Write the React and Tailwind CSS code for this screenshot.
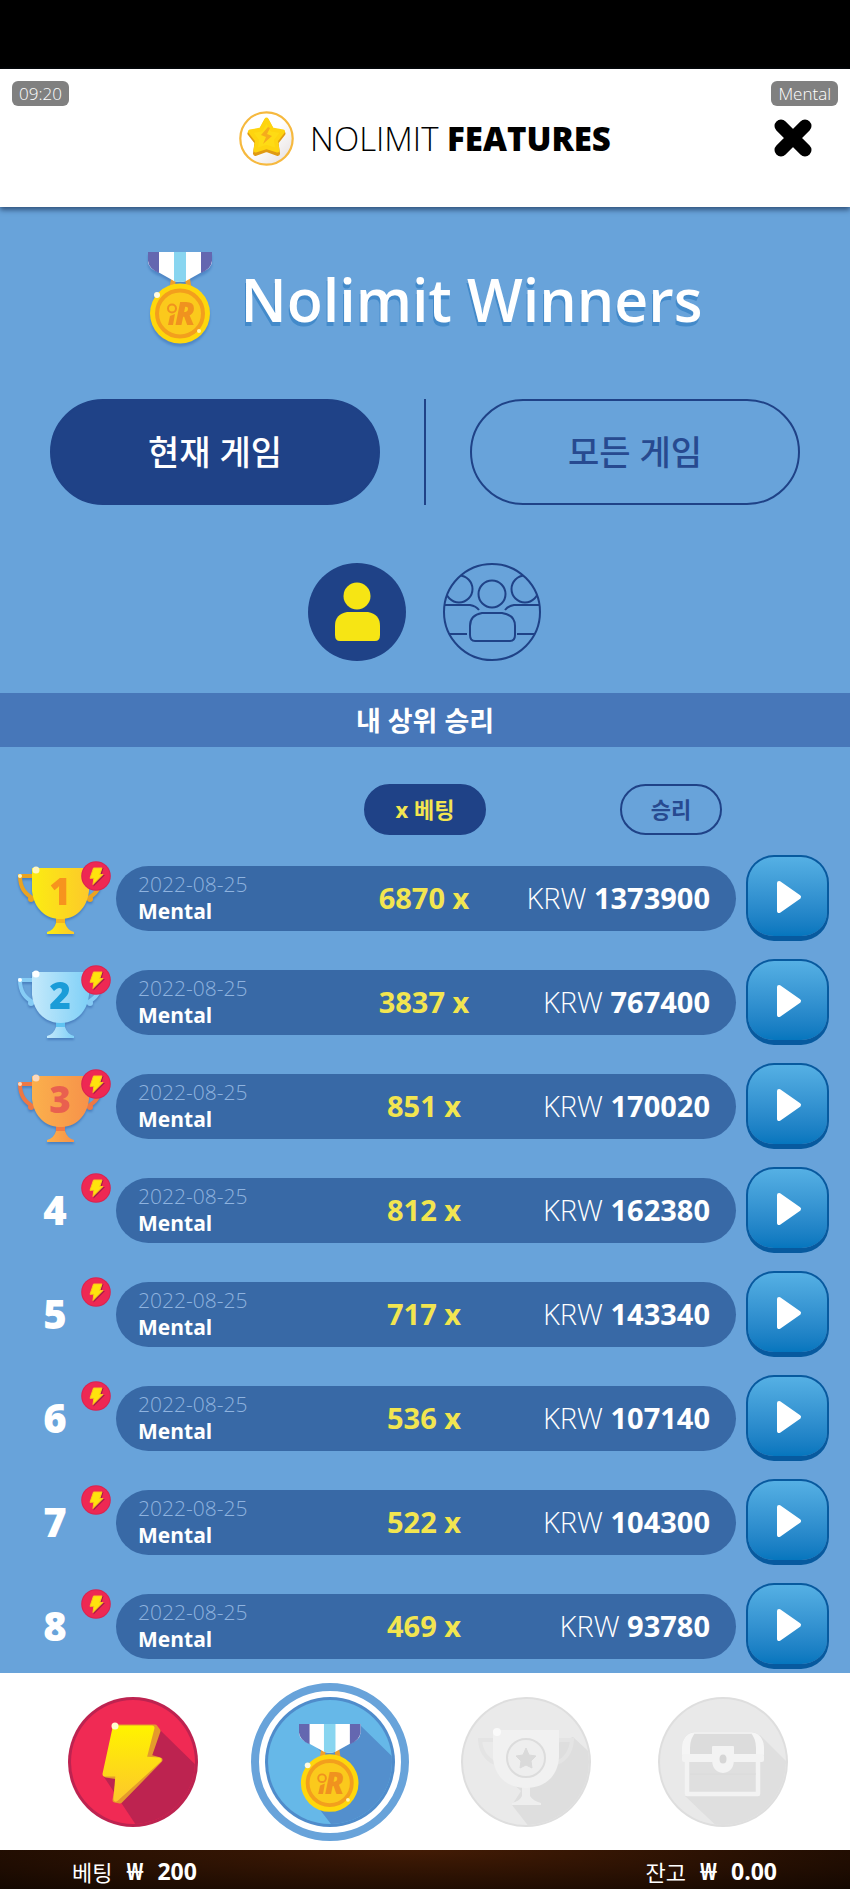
import { useState } from "react";

const wins = [
  { rank: 1, date: "2022-08-25", game: "Mental", multiplier: 6870, amount: 1373900 },
  { rank: 2, date: "2022-08-25", game: "Mental", multiplier: 3837, amount: 767400 },
  { rank: 3, date: "2022-08-25", game: "Mental", multiplier: 851, amount: 170020 },
  { rank: 4, date: "2022-08-25", game: "Mental", multiplier: 812, amount: 162380 },
  { rank: 5, date: "2022-08-25", game: "Mental", multiplier: 717, amount: 143340 },
  { rank: 6, date: "2022-08-25", game: "Mental", multiplier: 536, amount: 107140 },
  { rank: 7, date: "2022-08-25", game: "Mental", multiplier: 522, amount: 104300 },
  { rank: 8, date: "2022-08-25", game: "Mental", multiplier: 469, amount: 93780 },
];

const trophyColors = {
  1: { from: "#fbec12", to: "#fdc92a", handle: "#eba321", stem: "#f5b41f", digit: "#f7931e", shine: "#fff6c0" },
  2: { from: "#c4e9fb", to: "#7fd0f7", handle: "#86ccf5", stem: "#5fc3f2", digit: "#1b9cd8", shine: "#ffffff" },
  3: { from: "#fbb04c", to: "#f7924a", handle: "#ee7844", stem: "#f07a45", digit: "#e9604f", shine: "#fbd9bd" },
};

const StarIcon = () => (
  <svg viewBox="0 0 55 55" className="size-[55px]" aria-hidden="true">
    <defs>
      <linearGradient id="star-bg" x1="0" y1="0" x2="1" y2="1">
        <stop offset="0.5" stopColor="#ffffff" />
        <stop offset="1" stopColor="#e3dcdc" />
      </linearGradient>
    </defs>
    <circle cx="27.5" cy="27.5" r="26.2" fill="url(#star-bg)" stroke="#f6b93f" strokeWidth="2.2" />
    <path
      d="M27.5 10 L33 20.5 L44 22.5 L37 31.500 L38.5 42.500 L27.500 38.500 L16.500 42.500 L18 31.500 L11 22.500 L22 20.500Z"
      fill="#e09a12"
      stroke="#e09a12"
      strokeWidth="5"
      strokeLinejoin="round"
    />
    <path
      d="M27.500 8.500 L33 18.500 L44 20.500 L37 29.500 L38.500 39.500 L27.500 36 L16.500 39.500 L18 29.500 L11 20.500 L22 18.500Z"
      fill="#fedb14"
      stroke="#fed40f"
      strokeWidth="4"
      strokeLinejoin="round"
    />
    <path d="M29 16 L22 24 L27 26 L24 33 L33 25 L28 23 L31 17Z" fill="#f5ac1c" />
  </svg>
);

const MedalArt = () => (
  <g>
    <path d="M26 24 L24 36 M39 24 L41 36" stroke="#f0a02c" strokeWidth="5" />
    <path d="M0 0 H64 V10 Q63 17 54 20 L38 29 Q32 31 26 29 L10 20 Q1 17 0 10Z" fill="#ffffff" />
    <path d="M0 0 H11 V21 Q1 17 0 9Z" fill="#6467b0" />
    <path d="M64 0 H53 V21 Q63 17 64 9Z" fill="#6467b0" />
    <path d="M26 0 H38 V29 Q32 31 26 29Z" fill="#88d5f0" />
    <circle cx="32" cy="61.500" r="30" fill="#fed70c" />
    <circle cx="32" cy="61.500" r="23" fill="#fbc91c" stroke="#f39f1d" strokeWidth="4" />
    <circle cx="24" cy="56.500" r="4" fill="none" stroke="#f0921f" strokeWidth="2" />
    <path d="M22 64 L27 62 L25 73 H20Z" fill="#f0921f" />
    <text
      x="37"
      y="73"
      textAnchor="middle"
      fontSize="31"
      fontWeight="800"
      fontStyle="italic"
      fontFamily="'Open Sans', sans-serif"
      fill="#f0921f"
    >
      R
    </text>
    <circle cx="9" cy="43" r="3" fill="#fffbe0" />
    <circle cx="51" cy="79" r="2" fill="#fff3b0" />
  </g>
);

const BoltIcon = () => (
  <svg viewBox="0 0 130 130" className="size-[130px]" aria-hidden="true">
    <defs>
      <clipPath id="bolt-clip">
        <circle cx="65" cy="65" r="62" />
      </clipPath>
      <linearGradient id="bolt-fill" x1="0" y1="0" x2="0" y2="1">
        <stop offset="0" stopColor="#fff200" />
        <stop offset="1" stopColor="#fdc82a" />
      </linearGradient>
    </defs>
    <circle cx="65" cy="65" r="65" fill="#bd2350" />
    <circle cx="65" cy="65" r="62" fill="#f02a54" />
    <path d="M91 32 L140 80 V140 H76 L36 80Z" fill="#bd2350" clipPath="url(#bolt-clip)" />
    <path
      d="M49 30 H87 L90 34 L81 60 L92 63 L52 104 L47 103 L51 80 L38 78Z"
      fill="#e49b2c"
      stroke="#e49b2c"
      strokeWidth="5"
      strokeLinejoin="round"
    />
    <path
      d="M47 31 H84 L76 62 L91 63 L48 102 L50 77 H37Z"
      fill="url(#bolt-fill)"
      stroke="url(#bolt-fill)"
      strokeWidth="5"
      strokeLinejoin="round"
    />
    <circle cx="47" cy="29" r="3.500" fill="#fffccf" />
  </svg>
);

const BoltBadge = () => (
  <svg viewBox="0 0 30 30" className="absolute top-1.5 right-[5px] size-[30px]" aria-hidden="true">
    <circle cx="15" cy="15" r="14.800" fill="#d92350" />
    <circle cx="15" cy="15" r="13.800" fill="#ee2853" />
    <path d="M13.500 7 H22.500 L20.500 14 H24 L12.500 25.500 L13 18 H10Z" fill="#a31d48" />
    <path
      d="M12.500 7 H21 L18.800 13.500 H22 L12 23.500 L12.800 17.300 H9Z"
      fill="#ffe40c"
      stroke="#fdc51c"
      strokeWidth="1"
      strokeLinejoin="round"
    />
  </svg>
);

const MedalIcon = () => (
  <svg viewBox="0 0 130 130" className="size-[130px]" aria-hidden="true">
    <defs>
      <clipPath id="medal-clip">
        <circle cx="65" cy="65" r="62" />
      </clipPath>
    </defs>
    <circle cx="65" cy="65" r="65" fill="#4f8ccb" />
    <circle cx="65" cy="65" r="62" fill="#66b8e8" />
    <path d="M95 28 L140 72 V140 H76 L42 96 L64 64 L46 44Z" fill="#538fcd" clipPath="url(#medal-clip)" />
    <g transform="translate(34 27) scale(0.96)">
      <MedalArt />
    </g>
  </svg>
);

const CupIcon = () => (
  <svg viewBox="0 0 130 130" className="size-[130px]" aria-hidden="true">
    <defs>
      <clipPath id="cup-clip">
        <circle cx="65" cy="65" r="63" />
      </clipPath>
    </defs>
    <circle cx="65" cy="65" r="65" fill="#dedede" />
    <circle cx="65" cy="65" r="63" fill="#eaeaea" />
    <path d="M112 40 L140 66 V140 H76 L51 108 L60 94 L34 70Z" fill="#dedede" clipPath="url(#cup-clip)" />
    <path
      d="M33 43 H19 C20 55 25 62 34 66 M97 43 H111 C110 55 105 62 96 66"
      fill="none"
      stroke="#e4e4e4"
      strokeWidth="4"
    />
    <path d="M61 90 H69 V99 Q72 104 80 106 V108 H51 V106 Q59 104 61 99Z" fill="#eeeeee" />
    <path d="M32 33 H98 V60 C97 80 83 91 65 91 C47 91 33 80 32 60Z" fill="#f1f1f1" />
    <circle cx="65" cy="61" r="19" fill="#eeeeee" stroke="#dcdcdc" strokeWidth="2" />
    <path
      d="M65 51 L68 58 L75 59 L70 64 L71 71 L65 68 L59 71 L60 64 L55 59 L62 58Z"
      fill="#dadada"
      stroke="#dadada"
      strokeWidth="1"
      strokeLinejoin="round"
    />
    <circle cx="36" cy="35" r="4" fill="#fafafa" />
  </svg>
);

const ChestIcon = () => (
  <svg viewBox="0 0 130 130" className="size-[130px]" aria-hidden="true">
    <defs>
      <clipPath id="chest-clip">
        <circle cx="65" cy="65" r="63" />
      </clipPath>
    </defs>
    <circle cx="65" cy="65" r="65" fill="#dedede" />
    <circle cx="65" cy="65" r="63" fill="#e9e9e9" />
    <path d="M102 38 L140 76 V140 H70 L27 99Z" fill="#dfdfdf" clipPath="url(#chest-clip)" />
    <path d="M36 35 H94 Q105 37 105.500 50 V58 H24.500 V50 Q25 37 36 35Z" fill="#dcdcdc" />
    <path
      d="M29 60 V97 H100 V60"
      fill="#dfdfdf"
      stroke="#f3f3f3"
      strokeWidth="4.500"
      strokeLinejoin="round"
    />
    <path d="M32 77 H98" stroke="#dadada" strokeWidth="1" />
    <path d="M24 58 V50 Q25 36 38 35 Q32 41 32 51 V58Z" fill="#f5f5f5" />
    <path d="M106 58 V50 Q105 36 92 35 Q98 41 98 51 V58Z" fill="#f5f5f5" />
    <path d="M36 36 H94" stroke="#efefef" strokeWidth="2" />
    <rect x="24" y="57" width="82" height="8" rx="2" fill="#f3f3f3" />
    <path d="M55 49 H75 Q76 49 76 50 V62 Q76 75 65 76 Q54 75 54 62 V50 Q54 49 55 49Z" fill="#f3f3f3" />
    <ellipse cx="65" cy="62" rx="3.500" ry="4.500" fill="#d6d6d6" />
  </svg>
);

const PersonIcon = () => (
  <svg viewBox="0 0 98 98" className="size-[98px]" aria-hidden="true">
    <circle cx="49" cy="49" r="49" fill="#1f4287" />
    <circle cx="49" cy="33" r="13.500" fill="#f6e514" />
    <path d="M39 49 H60 Q72 51 72 63 V72 Q72 78 67 78 H32 Q27 78 27 72 V63 Q27 51 39 49Z" fill="#f6e514" />
  </svg>
);

const GroupIcon = () => (
  <svg viewBox="0 0 98 98" className="size-[98px]" fill="none" stroke="#1f4287" strokeWidth="2" aria-hidden="true">
    <defs>
      <clipPath id="group-clip">
        <circle cx="49" cy="49" r="48" />
      </clipPath>
    </defs>
    <circle cx="49" cy="49" r="48" />
    <circle cx="49" cy="31" r="13.500" />
    <path d="M39 50 H59 Q72 52 72 63 V72 Q72 78 67 78 H32 Q27 78 27 72 V63 Q27 52 39 50Z" />
    <g clipPath="url(#group-clip)">
      <circle cx="16" cy="26" r="13.500" />
      <circle cx="82" cy="26" r="13.500" />
      <path d="M0 42 H27 Q33 43 36 47 M98 42 H71 Q65 43 62 47 M0 71 H24 M74 71 H98" />
    </g>
  </svg>
);

const Trophy = ({ rank }) => {
  const c = trophyColors[rank];
  return (
    <svg viewBox="0 0 116 86" className="h-[86px] w-[116px] drop-shadow-[0_2px_1px_#4a80bf]" role="img" aria-label={`${rank}`}>
      <defs>
        <linearGradient id={`cup-${rank}`} x1="0" y1="0" x2="1" y2="0">
          <stop offset="0" stopColor={c.from} />
          <stop offset="1" stopColor={c.to} />
        </linearGradient>
      </defs>
      <path
        d="M34 21 H20 C20 33 25 39 34 44 M87 21 H101 C101 33 96 39 87 44"
        fill="none"
        stroke={c.handle}
        strokeWidth="4"
      />
      <circle cx="31" cy="44" r="3" fill={c.handle} />
      <circle cx="90" cy="44" r="3" fill={c.handle} />
      <circle cx="20" cy="21" r="2" fill={c.shine} />
      <path d="M56 62 H65 V68 Q67 75 74 77 V79 H47 V77 Q54 75 56 68Z" fill={`url(#cup-${rank})`} />
      <rect x="56" y="63" width="9" height="5" fill={c.stem} />
      <path d="M32 13 H89 V36 C87 54 75 64 60.500 64 C46 64 34 54 32 36Z" fill={`url(#cup-${rank})`} />
      <circle cx="36" cy="15" r="3.500" fill={c.shine} />
      <text
        x="60"
        y="50"
        textAnchor="middle"
        fontSize="37"
        fontWeight="800"
        fontFamily="'Open Sans', sans-serif"
        fill={c.digit}
      >
        {rank}
      </text>
    </svg>
  );
};

const WinRow = ({ win }) => (
  <li className="flex items-center pr-[21px]">
    <div className="relative flex h-[86px] w-[116px] shrink-0 items-center">
      {win.rank <= 3 ? (
        <Trophy rank={win.rank} />
      ) : (
        <span className="w-[110px] text-center text-[40px] leading-none font-extrabold">{win.rank}</span>
      )}
      <BoltBadge />
    </div>
    <div className="grid h-[65px] flex-1 grid-cols-[1fr_auto_1fr] items-center rounded-full bg-[#3869a6] pr-[26px] pl-[22px]">
      <div className="text-[21px] leading-[27px]">
        <p className="font-light text-[#8fb3df]">{win.date}</p>
        <p className="font-bold">{win.game}</p>
      </div>
      <p className="text-[29px] font-bold text-[#f2e550]">{win.multiplier} x</p>
      <p className="text-right text-[29px] font-light">
        KRW <span className="font-bold">{win.amount}</span>
      </p>
    </div>
    <button
      type="button"
      aria-label="Play"
      className="ml-2.5 flex h-[86px] w-[83px] shrink-0 items-center justify-center rounded-[28px] border-2 border-b-[5px] border-[#075a9f] bg-linear-to-b from-[#55b0e4] to-[#0576be] bg-clip-padding pl-0.5"
    >
      <svg viewBox="0 0 26 34" className="h-[34px] w-[26px]" aria-hidden="true">
        <path d="M3 3 L23 17 L3 31Z" fill="#ffffff" stroke="#ffffff" strokeWidth="4" strokeLinejoin="round" />
      </svg>
    </button>
  </li>
);

const App = () => {
  const [scope, setScope] = useState("current");
  const [sort, setSort] = useState("bet");

  const sorted = [...wins].sort((a, b) =>
    sort === "bet" ? b.multiplier - a.multiplier : b.amount - a.amount
  );

  const active = "bg-[#1f4287] border-[#1f4287]";
  const activeSort = "bg-[#1f4287] border-[#1f4287] text-[#f2e550]";
  const idle = "border-[#1f4287] text-[#274a90]";

  return (
    <div className="flex min-h-screen flex-col bg-[#68a3da] font-['Open_Sans','Noto_Sans_CJK_KR',sans-serif] text-white">
      <div className="h-[69px] bg-black" />

      <header className="relative z-10 grid h-[138px] grid-cols-[1fr_auto_1fr] items-center bg-white text-black shadow-[0_3px_5px_#33557f]">
        <span className="absolute top-3 left-3 rounded-md bg-[#808080] px-[7px] text-[17px] leading-[25px] font-light text-white">
          09:20
        </span>
        <span className="absolute top-3 right-3 rounded-md bg-[#808080] px-[7px] text-[17px] leading-[25px] font-light text-white">
          Mental
        </span>
        <div className="col-start-2 flex items-center gap-4">
          <StarIcon />
          <h2 className="text-[33px] leading-none font-light">
            NOLIMIT <span className="font-extrabold">FEATURES</span>
          </h2>
        </div>
        <button type="button" aria-label="Close" className="mr-[38px] justify-self-end">
          <svg viewBox="0 0 38 38" className="size-[38px]" aria-hidden="true">
            <path d="M7 7 L31 31 M31 7 L7 31" stroke="#000000" strokeWidth="13" strokeLinecap="round" />
          </svg>
        </button>
      </header>

      <main className="flex-1 pb-1">
        <div className="flex items-center justify-center gap-7 pt-[45px]">
          <svg viewBox="0 0 65 94" className="h-[94px] w-[65px] overflow-visible drop-shadow-[0_3px_1px_#4f87c6]" aria-hidden="true">
            <MedalArt />
          </svg>
          <h1 className="text-[59px] leading-none font-semibold [text-shadow:-1px_4px_0_#438aca]">Nolimit Winners</h1>
        </div>

        <div className="mt-[53px] grid grid-cols-[1fr_2px_1fr] gap-11 px-[50px]">
          <button
            type="button"
            onClick={() => setScope("current")}
            className={`h-[106px] rounded-full border-2 text-[34px] font-medium ${scope === "current" ? active : idle}`}
          >
            현재 게임
          </button>
          <div className="bg-[#1f4287]" />
          <button
            type="button"
            onClick={() => setScope("all")}
            className={`h-[106px] rounded-full border-2 text-[34px] font-medium ${scope === "all" ? active : idle}`}
          >
            모든 게임
          </button>
        </div>

        <div className="mt-[58px] flex justify-center gap-[37px] pr-0.5">
          <button type="button" aria-label="내 승리">
            <PersonIcon />
          </button>
          <button type="button" aria-label="모든 플레이어">
            <GroupIcon />
          </button>
        </div>

        <h3 className="mt-8 bg-[#4777b9] pt-0.5 text-center text-[27px] leading-[52px] font-bold">내 상위 승리</h3>

        <div className="mt-[37px] grid grid-cols-[1fr_auto_1fr] pr-[128px] pl-[128px]">
          <button
            type="button"
            onClick={() => setSort("bet")}
            className={`col-start-2 h-[51px] w-[122px] rounded-full border-2 text-[22px] font-bold ${sort === "bet" ? activeSort : idle}`}
          >
            x 베팅
          </button>
          <button
            type="button"
            onClick={() => setSort("win")}
            className={`h-[51px] w-[102px] justify-self-end rounded-full border-2 text-[22px] font-bold ${sort === "win" ? activeSort : idle}`}
          >
            승리
          </button>
        </div>

        <ol className="mt-5 flex flex-col gap-[18px]">
          {sorted.map((win) => (
            <WinRow key={win.rank} win={win} />
          ))}
        </ol>
      </main>

      <nav className="grid h-[177px] grid-cols-4 place-items-center bg-white pr-[29px] pl-[35px]">
        <button type="button" aria-label="Bolt">
          <BoltIcon />
        </button>
        <button
          type="button"
          aria-label="Winners"
          className="flex size-[158px] items-center justify-center rounded-full border-8 border-[#68a3da]"
        >
          <MedalIcon />
        </button>
        <button type="button" aria-label="Tournaments">
          <CupIcon />
        </button>
        <button type="button" aria-label="Chest">
          <ChestIcon />
        </button>
      </nav>

      <footer className="flex h-[39px] items-center justify-between bg-radial-[at_50%_0%] from-[#421b05] to-[#140801] pt-1 pr-[73px] pl-[72px] text-[23px] leading-none font-bold">
        <p className="flex items-center gap-3.5">
          <span className="text-[22px] font-normal">베팅</span>
          <span className="font-['Noto_Sans',sans-serif]">₩</span>
          <span>200</span>
        </p>
        <p className="flex items-center gap-3.5">
          <span className="text-[22px] font-normal">잔고</span>
          <span className="font-['Noto_Sans',sans-serif]">₩</span>
          <span>0.00</span>
        </p>
      </footer>
    </div>
  );
};

export default App;
